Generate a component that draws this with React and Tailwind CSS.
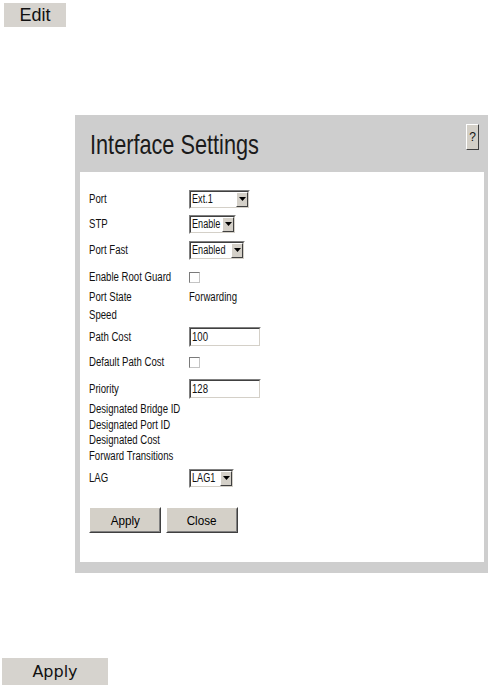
import React from 'react'

const T = ({ children, className = '' }) => (
  <span className={`inline-block origin-left scale-x-[0.8] whitespace-nowrap ${className}`}>{children}</span>
)

function Sunken({ className = '', children }) {
  return (
    <div className={`border border-t-[#808080] border-l-[#808080] border-b-white border-r-white ${className}`}>
      <div className="h-full border border-t-[#404040] border-l-[#404040] border-b-[#d4d0c8] border-r-[#d4d0c8] bg-white flex items-center">
        {children}
      </div>
    </div>
  )
}

function Select({ value, width }) {
  return (
    <Sunken className={`${width} h-[19px]`}>
      <div className="flex-1 min-w-0 pl-[1px] text-[12px] leading-none">
        <span className="inline-block origin-left scale-x-[0.76] whitespace-nowrap">{value}</span>
      </div>
      <div className="relative shrink-0 h-full w-[12px] bg-[#d4d0c8] border border-t-white border-l-white border-b-[#404040] border-r-[#404040] flex items-center justify-center">
        <svg width="7" height="4" viewBox="0 0 7 4">
          <path d="M0 0h7L3.5 4z" fill="#000" />
        </svg>
      </div>
    </Sunken>
  )
}

function TextInput({ value }) {
  return (
    <Sunken className="w-[72px] h-[20px]">
      <div className="pl-[1px] text-[12px] leading-none">
        <T>{value}</T>
      </div>
    </Sunken>
  )
}

function Check() {
  return (
    <div className="w-[11px] h-[11px] bg-white border border-t-[#7a7a7a] border-l-[#7a7a7a] border-b-[#c4c4c4] border-r-[#c4c4c4]" />
  )
}

function RaisedButton({ children }) {
  return (
    <button className="w-[72px] h-[26px] bg-[#d4d0c8] border border-t-white border-l-white border-b-[#404040] border-r-[#404040]">
      <div className="h-full border border-t-[#d4d0c8] border-l-[#d4d0c8] border-b-[#808080] border-r-[#808080] flex items-center justify-center text-[13px] text-black">
        <span className="inline-block scale-x-[0.9]">{children}</span>
      </div>
    </button>
  )
}

const rows = [
  { label: 'Port', h: 'h-[26px]', value: <Select value="Ext.1" width="w-[61px]" /> },
  { label: 'STP', h: 'h-[24px]', value: <Select value="Enable" width="w-[47px]" /> },
  { label: 'Port Fast', h: 'h-[28px]', value: <Select value="Enabled" width="w-[56px]" /> },
  { label: 'Enable Root Guard', h: 'h-[26px]', value: <Check /> },
  { label: 'Port State', h: 'h-[14px]', value: <T>Forwarding</T> },
  { label: 'Speed', h: 'h-[22px]', value: null },
  { label: 'Path Cost', h: 'h-[22px]', value: <TextInput value="100" /> },
  { label: 'Default Path Cost', h: 'h-[28px]', value: <Check /> },
  { label: 'Priority', h: 'h-[25px]', value: <TextInput value="128" /> },
  { label: 'Designated Bridge ID', h: 'h-[16px]', value: null },
  { label: 'Designated Port ID', h: 'h-[16px]', value: null },
  { label: 'Designated Cost', h: 'h-[14px]', value: null },
  { label: 'Forward Transitions', h: 'h-[18px]', value: null },
  { label: 'LAG', h: 'h-[26px]', value: <Select value="LAG1" width="w-[45px]" /> },
]

export default function App() {
  return (
    <div className="w-[490px] h-[685px] bg-white overflow-hidden font-['Liberation_Sans',Arial,sans-serif] text-[#111]">
      <div className="pt-[3px] pl-[4px]">
        <button className="w-[62px] h-[24px] bg-[#d6d3ce] flex items-center justify-center text-[18px] text-[#111]">
          Edit
        </button>
      </div>

      <div className="mt-[88px] ml-[75px] w-[413px] h-[458px] bg-[#cecece] flex flex-col">
        <div className="h-[57px] flex justify-between items-start">
          <h1 className="mt-[16px] pl-[15px] h-[28px] text-[28px] leading-[28px] text-[#1a1a1a] font-normal">
            <span className="inline-block origin-left scale-x-[0.775] whitespace-nowrap">Interface Settings</span>
          </h1>
          <button className="mt-[9px] mr-[9px] w-[13px] h-[26px] bg-[#d4d0c8] border border-t-white border-l-white border-b-[#404040] border-r-[#404040] flex items-center justify-center text-[12px] leading-none">
            ?
          </button>
        </div>

        <div className="ml-[5px] w-[404px] h-[390px] bg-white pt-[14px] pl-[9px] text-[12px] leading-none">
          {rows.map(r => (
            <div key={r.label} className={`${r.h} flex items-center`}>
              <div className="w-[100px]">
                <T>{r.label}</T>
              </div>
              <div className="flex items-center">{r.value}</div>
            </div>
          ))}
          <div className="mt-[16px] flex gap-[5px]">
            <RaisedButton>Apply</RaisedButton>
            <RaisedButton>Close</RaisedButton>
          </div>
        </div>
      </div>

      <div className="mt-[85px] ml-[2px]">
        <button className="w-[106px] h-[27px] bg-[#d6d3ce] flex items-center justify-center text-[16px] font-['DejaVu_Sans',sans-serif] text-[#111]">
          Apply
        </button>
      </div>
    </div>
  )
}
